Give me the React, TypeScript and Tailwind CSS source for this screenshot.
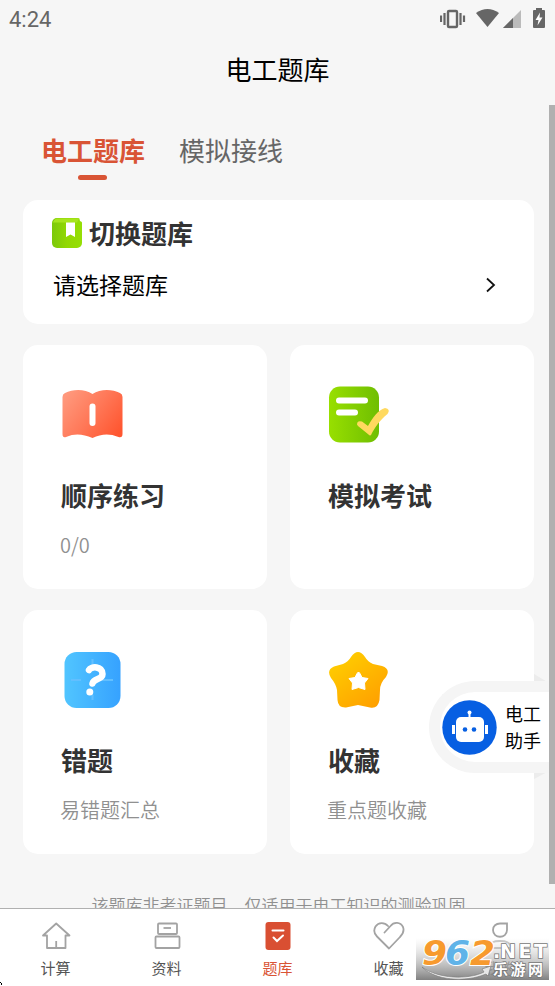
import React, { useState } from 'react';

const BookmarkIcon = () => (
  <svg width="30" height="32" viewBox="0 0 30 32">
    <defs>
      <linearGradient id="bookmark" x1="0" x2="1">
        <stop offset="0" stopColor="#7cc90a" />
        <stop offset="0.5" stopColor="#92d803" />
        <stop offset="1" stopColor="#95df05" />
      </linearGradient>
    </defs>
    <rect x="0" y="1" width="30" height="30" rx="5" fill="url(#bookmark)" />
    <path d="M1 5.500Q2 2 5 1.500H27L25 5.500Z" fill="#a7e51d" />
    <path d="M27.500 2L30 1V5L28 4Z" fill="#fff" />
    <path d="M14 5.500H23V20L18.500 17.500L14 20Z" fill="#fff" />
  </svg>
);

const BookIcon = () => (
  <svg width="64" height="64" viewBox="0 0 64 64">
    <defs>
      <linearGradient id="book" x1="0" y1="0.2" x2="1" y2="0.8">
        <stop offset="0" stopColor="#ff987c" />
        <stop offset="0.5" stopColor="#ff7858" />
        <stop offset="1" stopColor="#ff5630" />
      </linearGradient>
    </defs>
    <path
      d="M2.500 15Q2.500 12 5 11C13 7 25 7 32.500 12C40 7 52 7 60 11Q62.500 12 62.500 15V52Q62.500 56 58.500 55C49 51 41 52 32.500 56C23 52 15 51 6 55Q2.500 56 2.500 52Z"
      fill="url(#book)"
    />
    <path d="M32.500 24.500V41" stroke="#fff" strokeWidth="6" strokeLinecap="round" />
  </svg>
);

const ExamIcon = () => (
  <svg width="64" height="64" viewBox="0 0 64 64">
    <defs>
      <linearGradient id="exam" x1="0" x2="1">
        <stop offset="0" stopColor="#98df00" />
        <stop offset="1" stopColor="#6fbe02" />
      </linearGradient>
    </defs>
    <rect x="2" y="4.500" width="50" height="56" rx="11" fill="url(#exam)" />
    <path d="M12 18.500H38M12 30.500H28" stroke="#fff" strokeWidth="6" strokeLinecap="round" />
    <path
      d="M30 42.500Q30 38 35 39.500L41 44C46 35 51 28 58 26Q64 27 60.500 32C53 38 48 45 44 53Q43 54 41.500 52.500L31 44Z"
      fill="#ffd95f"
    />
  </svg>
);

const QuestionIcon = () => (
  <svg width="64" height="64" viewBox="0 0 64 64">
    <defs>
      <linearGradient id="question" x1="0" x2="1">
        <stop offset="0" stopColor="#51c5ff" />
        <stop offset="1" stopColor="#36a2ff" />
      </linearGradient>
    </defs>
    <rect x="4.500" y="5" width="56" height="56" rx="12" fill="url(#question)" />
    <path d="M11 33H21M42 33H53M32.500 12V18M32.500 48V53" stroke="#62bfff" strokeWidth="2" />
    <path
      d="M29 23C31 19 42.500 19 42.500 27C42.500 33 34 31 32.500 36.500"
      fill="none"
      stroke="#fff"
      strokeWidth="6.500"
      strokeLinecap="round"
    />
    <circle cx="29.800" cy="45" r="3.500" fill="#fff" />
  </svg>
);

const StarIcon = () => (
  <svg width="64" height="64" viewBox="0 0 64 64">
    <defs>
      <linearGradient id="star" x1="0.1" y1="0.1" x2="0.8" y2="1">
        <stop offset="0" stopColor="#ffce00" />
        <stop offset="1" stopColor="#ff9f00" />
      </linearGradient>
    </defs>
    <path
      d="M24 10Q31 0 38 10Q41 15 46 17L55 19Q64 22 59 30Q53 36 53 43L52.500 53Q51 62 43 60.500L31 58L19 60.500Q11 61 10.500 53L10 43Q9 37 4 31Q-1 23 7 19.500L16 17Q21 15 24 10Z"
      fill="url(#star)"
    />
    <path
      d="M31.500 25Q32.500 25 35 30.500L41 31.500L37.500 36L38 42.500L31.500 40.500L25 42.500L25.500 36L22 31.500L28 30.500Q30.500 25 31.500 25Z"
      fill="#fff"
      stroke="#fff"
      strokeLinejoin="round"
    />
  </svg>
);

const RobotIcon = () => (
  <svg width="55" height="55" viewBox="0 0 55 55" className="shrink-0">
    <circle cx="27.500" cy="27.500" r="27.200" fill="#075fe2" />
    <rect x="14" y="17" width="28" height="25" rx="5" fill="#fff" />
    <path d="M27.500 18V12" stroke="#fff" strokeWidth="2" />
    <circle cx="27.500" cy="12.500" r="2" fill="#fff" />
    <path d="M11.500 25V34M44.500 25V34" stroke="#fff" strokeWidth="3" />
    <circle cx="23" cy="29.500" r="2.300" fill="#075fe2" />
    <circle cx="32" cy="29.500" r="2.300" fill="#075fe2" />
  </svg>
);

const StatusIcons = () => (
  <svg width="115" height="38" viewBox="440 0 115 38" fill="#666">
    <rect x="448" y="11" width="9" height="16" rx="1" fill="none" stroke="#666" strokeWidth="2.400" />
    <path d="M444.500 13V25M441 15.500V22M460.500 13V25M464 15.500V22" stroke="#666" strokeWidth="2.200" />
    <path d="M476 13Q487.500 5 499 13L487.500 27Z" />
    <path d="M503 28L521 10V28Z" fill="#bbb" />
    <path d="M503 28L513 18V28Z" />
    <path d="M536 8H542V10H544Q545 10 545 11V27Q545 28 544 28H534Q533 28 533 27V11Q533 10 534 10H536Z" />
    <path d="M540 12.500L535.500 20H538.500L537.500 25.500L542.500 17.500H539.500Z" fill="#fff" />
  </svg>
);

const HomeIcon = () => (
  <svg width="32" height="30" viewBox="0 0 32 30" fill="none" stroke="#a3a3a3" strokeWidth="1.800" strokeLinejoin="round">
    <path d="M16.200 2.500L29.500 14.500H25.500V27H7V14.500H3Z" />
    <path d="M16.200 20V26.500" />
  </svg>
);

const FilesIcon = () => (
  <svg width="32" height="30" viewBox="0 0 32 30" fill="none" stroke="#a3a3a3" strokeWidth="1.800">
    <rect x="7" y="2.500" width="19" height="10.500" rx="1" />
    <rect x="4.500" y="15.500" width="24" height="11.500" rx="1" />
    <path d="M12.500 7H20" />
  </svg>
);

const BankIcon = () => (
  <svg width="32" height="30" viewBox="0 0 32 30" fill="none">
    <rect x="3.500" y="1" width="25" height="28" rx="3" fill="#d94f32" />
    <path d="M10.500 9.500H21.500M11.500 16.500L15 20L21 14.500" stroke="#fff" strokeWidth="2" strokeLinecap="round" />
  </svg>
);

const HeartIcon = () => (
  <svg width="32" height="30" viewBox="0 0 32 30" fill="none" stroke="#a3a3a3" strokeWidth="1.800" strokeLinecap="round" strokeLinejoin="round">
    <path d="M11.500 11.500L17.500 5C21 .5 27.500 1 30 6C31.500 10 30 13 27 16L16 27.500L4 15.500C1 12.500 .5 9 2.500 5.500C5.500 1 11.500 1 15 5" />
  </svg>
);

const UserIcon = () => (
  <svg width="32" height="30" viewBox="0 0 32 30" fill="none" stroke="#a3a3a3" strokeWidth="1.800">
    <path d="M16 2.500H23V9C23 18 9 18 9 9C9 5 12 2.500 16 2.500Z" />
    <path d="M5 27C6 21 10 20 16 20S26 21 27 27Z" />
  </svg>
);

const cards = [
  { title: '顺序练习', note: '0/0', icon: <BookIcon /> },
  { title: '模拟考试', note: '', icon: <ExamIcon /> },
  { title: '错题', note: '易错题汇总', icon: <QuestionIcon /> },
  { title: '收藏', note: '重点题收藏', icon: <StarIcon /> },
];

const navItems = [
  { label: '计算', icon: <HomeIcon /> },
  { label: '资料', icon: <FilesIcon /> },
  { label: '题库', icon: <BankIcon /> },
  { label: '收藏', icon: <HeartIcon /> },
  { label: '我的', icon: <UserIcon /> },
];

const Watermark = () => (
  <svg className="absolute left-[416px] top-[938px]" width="133" height="42" viewBox="0 0 133 42">
    <defs>
      <linearGradient id="shade" x1="0" y1="0" x2="0" y2="1">
        <stop offset="0" stopColor="#fff" stopOpacity="0.4" />
        <stop offset="1" stopColor="#7a7a7a" stopOpacity="0.95" />
      </linearGradient>
      <linearGradient id="swoosh" x1="0" x2="1">
        <stop offset="0" stopColor="#fff" />
        <stop offset="1" stopColor="#e5e5e5" />
      </linearGradient>
    </defs>
    <rect width="133" height="42" fill="url(#shade)" />
    <path d="M6 29C22 41 52 42 68 34L66 31L75 28L72 38L70 36C49 45 18 42 6 29Z" fill="url(#swoosh)" stroke="#777" strokeWidth="0.6" />
    <g
      fontFamily="DejaVu Sans, sans-serif"
      fontWeight="bold"
      fontStyle="italic"
      fontSize="33"
      stroke="#fff"
      strokeWidth="2"
      paintOrder="stroke"
    >
      <text x="6" y="27" textLength="25" lengthAdjust="spacingAndGlyphs" fill="#f79a2e">9</text>
      <text x="29" y="27" textLength="25" lengthAdjust="spacingAndGlyphs" fill="#60b3e8">6</text>
      <text x="54" y="27" textLength="25" lengthAdjust="spacingAndGlyphs" fill="#f79a2e">2</text>
    </g>
    <g fill="#fff" stroke="#777" strokeWidth="1.500" paintOrder="stroke" fontWeight="bold">
      <text x="77" y="20" fontSize="19" fontFamily="DejaVu Sans, sans-serif">.</text>
      <text x="84" y="20" fontSize="19" fontFamily="DejaVu Sans, sans-serif" textLength="47">NET</text>
      <text x="77" y="37" fontSize="15" fontFamily="Noto Sans CJK SC, sans-serif" textLength="50">乐游网</text>
    </g>
  </svg>
);

const App: React.FC = () => {
  const [tab, setTab] = useState(0);
  const [activeNav, setActiveNav] = useState(2);

  return (
    <div className="relative flex h-[986px] w-[555px] flex-col overflow-hidden bg-[#f6f6f6] font-['Noto_Sans_CJK_SC',sans-serif] text-black">
      <div className="flex h-[38px] shrink-0 items-center justify-between pl-[9px] font-[Roboto,sans-serif] text-[22px] text-[#666]">
        <span>4:24</span>
        <StatusIcons />
      </div>
      <header className="flex h-[67px] shrink-0 justify-center pt-[12px] text-[26px] leading-[38px]">电工题库</header>

      <main className="h-[803px] shrink-0 overflow-hidden pl-[23px] pr-[21px]">
        <div className="flex h-[95px] gap-[34px] pl-[18px] pt-[26px] text-[26px] leading-[38px]">
          {['电工题库', '模拟接线'].map((name, i) => (
            <button
              key={name}
              onClick={() => setTab(i)}
              className={`flex flex-col items-center ${tab === i ? 'font-bold text-[#d95435]' : 'text-[#666]'}`}
            >
              {name}
              {tab === i && <span className="mr-px mt-[6px] h-[5px] w-[29px] rounded-full bg-[#d95435]" />}
            </button>
          ))}
        </div>

        <section className="h-[124px] rounded-[15px] bg-white px-[29px] pt-[14px]">
          <h2 className="flex h-[38px] items-center gap-[7px] text-[26px] font-bold leading-[38px] text-[#333]">
            <BookmarkIcon />
            切换题库
          </h2>
          <button className="mt-[15px] flex h-[34px] w-full items-center justify-between pl-px pr-[8px] text-[23px] leading-[34px]">
            请选择题库
            <svg width="12" height="20" viewBox="0 0 12 20" fill="none" stroke="#111" strokeWidth="1.800">
              <path d="M2 4.500L9 11L2 17.500" />
            </svg>
          </button>
        </section>

        <div className="mt-[21px] grid grid-cols-2 gap-x-[23px] gap-y-[21px]">
          {cards.map((card) => (
            <section key={card.title} className="h-[244px] rounded-[15px] bg-white pl-[37px] pt-[37px]">
              {card.icon}
              <h3 className="mt-[30px] pl-px text-[26px] font-bold leading-[38px] text-[#333]">{card.title}</h3>
              <p className="mt-[16px] text-[20px] font-[350] leading-[30px] text-[#909090]">{card.note}</p>
            </section>
          ))}
        </div>
        <p className="mt-[38px] text-center text-[17px] font-[350] leading-[25px] text-[#909090]">
          该题库非考证题目，仅适用于电工知识的测验巩固
        </p>
      </main>

      <nav className="grid h-[78px] shrink-0 grid-cols-5 border-t border-[#b0b0b0] bg-white pt-[12px]">
        {navItems.map((item, i) => (
          <button
            key={i}
            onClick={() => setActiveNav(i)}
            className={`flex flex-col items-center text-[15px] leading-[22px] ${activeNav === i ? 'text-[#d95435]' : 'text-[#555]'}`}
          >
            {item.icon}
            <span className="mt-[6px]">{item.label}</span>
          </button>
        ))}
      </nav>

      <svg className="absolute left-[534px] top-[673px]" width="15" height="110" viewBox="0 0 15 110">
        <path d="M0 1L15 10V20H0ZM0 90H15V98L0 106Z" fill="#ececec" />
      </svg>
      <div className="absolute left-[429px] top-[681px] flex h-[92px] w-[126px] items-center gap-[8px] rounded-l-[48px] border-y-[11px] border-l-[11px] border-[#f5f5f5] bg-white pl-[2px]">
        <RobotIcon />
        <span className="w-[38px] text-[18px] leading-[27px]">电工助手</span>
      </div>
      <div className="absolute right-0 top-[105px] h-[779px] w-[6px] bg-[#b0b0b0]" />
      <Watermark />
      <svg className="absolute bottom-0 left-0" width="3" height="4" viewBox="0 0 3 4">
        <path d="M0 0H1V1H0ZM1 1H2V3H1Z" />
      </svg>
    </div>
  );
};

export default App;
